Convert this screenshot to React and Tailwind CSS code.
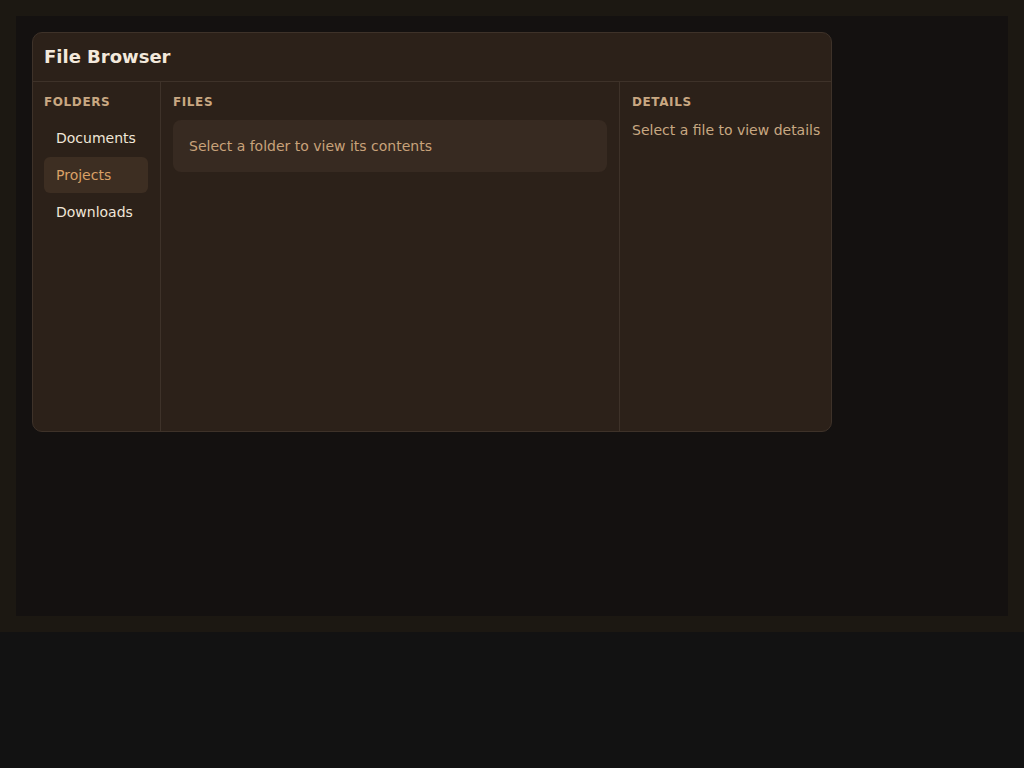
import React, { useState } from 'react'

const folders = ['Documents', 'Projects', 'Downloads']

function SectionLabel({ children }) {
  return (
    <div className="text-xs leading-4 font-bold uppercase tracking-wider text-[#c9a882] mb-[10px]">
      {children}
    </div>
  )
}

export default function App() {
  const [selected, setSelected] = useState('Projects')

  return (
    <div className="min-h-screen bg-[#121212] font-['DejaVu_Sans',sans-serif]">
      <div className="bg-[#1c1812] p-4">
        <div className="bg-[#141110] h-[600px] p-4">
          {/* Card */}
          <div className="w-[800px] h-[400px] flex flex-col bg-[#2c2119] border border-[#3e3229] rounded-[10px] overflow-hidden">
            <div className="h-[49px] shrink-0 flex items-center px-[11px] border-b border-[#3e3229]">
              <h1 className="text-lg font-bold text-[#f3e9dc]">File Browser</h1>
            </div>

            <div className="flex flex-1 min-h-0">
              {/* Folders */}
              <div className="w-[128px] shrink-0 border-r border-[#3e3229] pl-[11px] pr-3 pt-3">
                <SectionLabel>Folders</SectionLabel>
                <div className="flex flex-col gap-px">
                  {folders.map((f) => (
                    <button
                      key={f}
                      onClick={() => setSelected(f)}
                      className={
                        selected === f
                          ? 'h-9 text-left px-3 rounded-md text-sm bg-[#3d2e22] text-[#d9a066]'
                          : 'h-9 text-left px-3 rounded-md text-sm text-[#f0e6d8]'
                      }
                    >
                      {f}
                    </button>
                  ))}
                </div>
              </div>

              {/* Files */}
              <div className="flex-1 min-w-0 px-3 pt-3">
                <SectionLabel>Files</SectionLabel>
                <div className="h-[52px] flex items-center px-4 rounded-lg bg-[#372a21] text-sm text-[#c8a27a]">
                  Select a folder to view its contents
                </div>
              </div>

              {/* Details */}
              <div className="w-[212px] shrink-0 border-l border-[#3e3229] px-3 pt-3">
                <SectionLabel>Details</SectionLabel>
                <p className="text-sm leading-5 whitespace-nowrap text-[#c8a882]">Select a file to view details</p>
              </div>
            </div>
          </div>
        </div>
      </div>
    </div>
  )
}
